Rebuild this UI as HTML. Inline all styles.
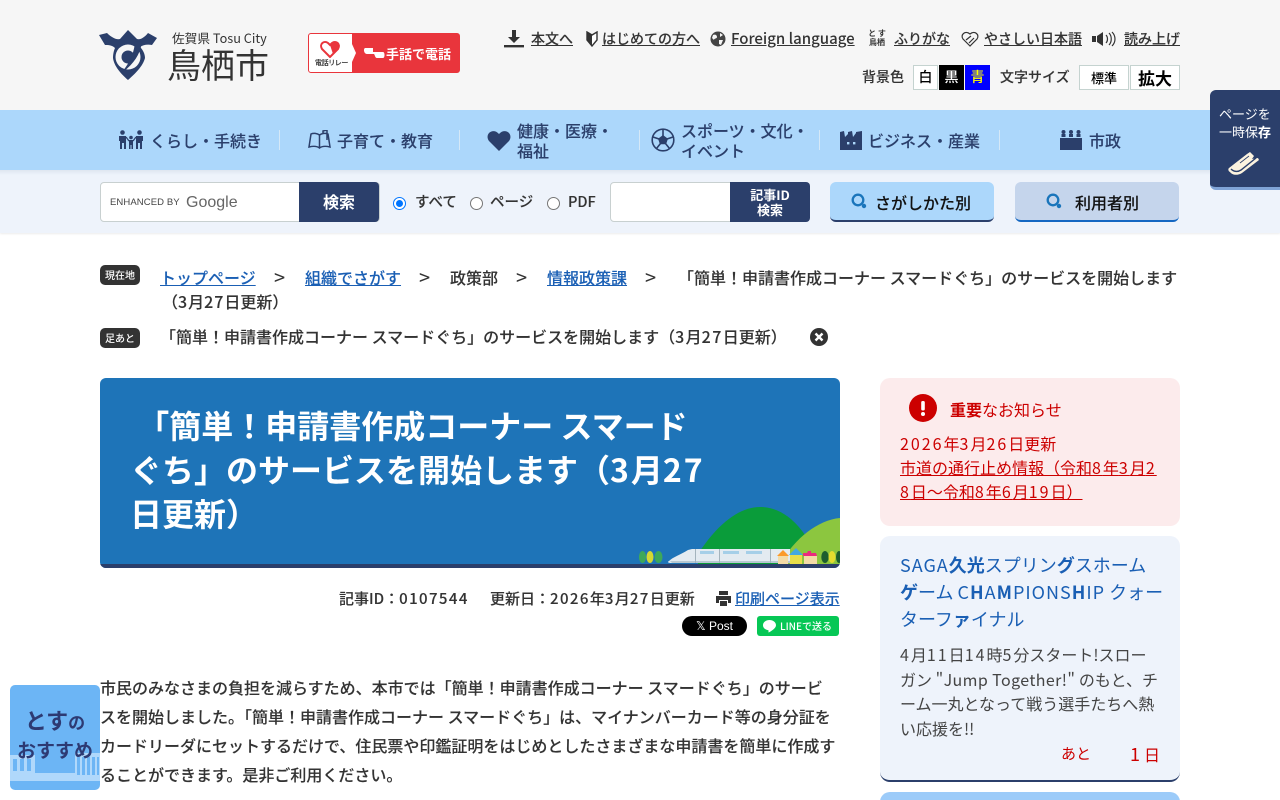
<!DOCTYPE html>
<html lang="ja"><head><meta charset="utf-8"><title>鳥栖市</title>
<style>
*{box-sizing:border-box}
html{margin:0;padding:0;width:1280px;height:800px;overflow:hidden}
body{margin:0;padding:0;width:1280px;height:800px;overflow:hidden;position:relative;background:#fff;font-family:"Liberation Sans","Noto Sans CJK JP",sans-serif;color:#333}
#w{position:absolute;left:0;top:0;width:1280px;height:800px;overflow:hidden}
.a{position:absolute}
.t{position:absolute;white-space:nowrap;font-family:"Noto Sans CJK JP","Liberation Sans",sans-serif}
.b{font-weight:500;-webkit-text-stroke:.1px currentColor}
a{color:inherit;text-decoration:underline}
.d{letter-spacing:1.400px}
.e{letter-spacing:2px}
.c{letter-spacing:1px}
</style></head><body><div id="w">
<div class="a" style="left:0;top:0;width:1280px;height:110px;background:#f6f6f6"></div>
<!-- logo -->
<svg class="a" style="left:99px;top:30px" width="58" height="50" viewBox="0 0 58 50"><path d="M0 5 L8 3 C13 8 18 10 21 9 L29 0 L38 9 C41 10 45 8 49 3 L58 8 L53 15 C48 14 44 15 41 17 C44 20 46 24 46 28 C44 36 36 44 29 50 C22 44 15 36 14 28 C14 24 15 20 16 18 C13 15 9 15 6 15 Z" fill="#2b3f6b"/><circle cx="29" cy="27" r="12.500" fill="#f6f6f6"/><circle cx="29" cy="27" r="6.500" fill="#2b3f6b"/><path d="M43 11 C42 22 36 34 22 43 C30 34 35 24 36 12 Z" fill="#2b3f6b"/></svg>
<div class="t" style="left:172px;top:29px;font-size:12.700px;line-height:18px;color:#333">佐賀県 Tosu City</div>
<div class="t" style="left:167px;top:41px;font-size:34px;line-height:45px;color:#333">鳥栖市</div>
<!-- sign -->
<div class="a" style="left:308px;top:33px;width:152px;height:40px;border:1px solid #e9353c;border-radius:3px;background:#e9353c;overflow:hidden"><div class="a" style="left:0;top:0;width:43px;height:38px;background:#fff"></div>
<div class="a" style="left:43px;top:10px;border-left:4px solid #fff;border-top:9px solid transparent;border-bottom:9px solid transparent"></div>
<svg class="a" style="left:11px;top:6px" width="20" height="18" viewBox="0 0 20 18"><path d="M10 17 L2 9 C-1 4 4 0 8 3 L10 5 L12 3 C16 0 21 4 18 9 Z" fill="none" stroke="#e9353c" stroke-width="2"/><path d="M10 5 L12 3 C16 0 21 4 18 9 L13 14 Z" fill="#e9353c"/></svg>
<div class="t b" style="left:6px;top:24px;font-size:7px;line-height:10px;color:#333;letter-spacing:-.4px">電話リレー</div>
<svg class="a" style="left:54px;top:12px" width="24" height="14" viewBox="0 0 24 14"><path d="M2 2 H10 V6 H20 C22 6 22 12 20 12 H14 C12 12 12 9 11 8 H4 C1 8 0 3 2 2Z" fill="#fff"/></svg>
<div class="t" style="left:77px;top:10px;font-size:13px;font-weight:700;line-height:19px;color:#fff">手話で電話</div></div>
<!-- top links -->
<svg class="a" style="left:504px;top:30px" width="20" height="18" viewBox="0 0 20 18" fill="#333"><path d="M8 0h4v7h4l-6 6-6-6h4z"/><rect x="0" y="15" width="20" height="2.400"/></svg>
<div class="t b" style="left:531px;top:29px;font-size:14px;line-height:20px"><a>本文へ</a></div>
<svg class="a" style="left:586px;top:31px" width="12" height="16" viewBox="0 0 12 16"><path d="M1 1 L6 4 L11 1 V9 L6 15 L1 9Z" fill="#fff" stroke="#333" stroke-width="1.400"/><path d="M1 1 L6 4 V15 L1 9Z" fill="#333"/></svg>
<div class="t b" style="left:602px;top:29px;font-size:14px;line-height:20px"><a>はじめての方へ</a></div>
<svg class="a" style="left:710px;top:31px" width="16" height="16" viewBox="0 0 16 16"><circle cx="8" cy="8" r="7.500" fill="#444"/><path d="M3 4 C5 3 7 4 7 6 C7 8 4 7 4 9 L2 7Z M10 2 L13 4 L10 6Z M9 9 L13 9 L11 14 L9 13Z" fill="#f6f6f6"/></svg>
<div class="t" style="left:731px;top:28px;font-size:15px;line-height:21px;font-weight:500"><a>Foreign language</a></div>
<div class="t" style="left:866px;top:29px;font-size:8px;line-height:9px;color:#333;width:22px;text-align:center;white-space:normal;font-weight:700">と す<br>鳥栖</div>
<div class="t b" style="left:894px;top:29px;font-size:14px;line-height:20px"><a>ふりがな</a></div>
<svg class="a" style="left:961px;top:31px" width="18" height="16" viewBox="0 0 18 16"><path d="M9 15 L2 8 C-1 4 4 -1 9 3 C14 -1 19 4 16 8 Z M5 9 L10 5 M8 12 L13 7" fill="none" stroke="#333" stroke-width="1.200"/></svg>
<div class="t b" style="left:984px;top:29px;font-size:14px;line-height:20px"><a>やさしい日本語</a></div>
<svg class="a" style="left:1092px;top:31px" width="27" height="16" viewBox="0 0 27 16" fill="#333"><rect x="0" y="5" width="4" height="6"/><path d="M5 5 L11 1 V15 L5 11Z"/><path d="M14 4 C16 6 16 10 14 12 M17 2 C20 5 20 11 17 14 M20 1 C24 5 24 11 20 15" stroke="#333" fill="none" stroke-width="1.200"/></svg>
<div class="t b" style="left:1124px;top:29px;font-size:14px;line-height:20px"><a>読み上げ</a></div>
<div class="t b" style="left:862px;top:67px;font-size:14px;line-height:20px">背景色</div>
<div class="t" style="left:913px;top:65px;width:25px;height:25px;background:#fff;border:1px solid #c5d3d0;font-size:14px;line-height:23px;text-align:center;color:#000;font-weight:500">白</div>
<div class="t" style="left:939px;top:65px;width:25px;height:25px;background:#000;font-size:14px;line-height:25px;text-align:center;color:#fff;font-weight:500">黒</div>
<div class="t" style="left:965px;top:65px;width:25px;height:25px;background:#00f;font-size:14px;line-height:25px;text-align:center;color:#ff0;font-weight:500">青</div>
<div class="t b" style="left:1000px;top:67px;font-size:14px;line-height:20px">文字サイズ</div>
<div class="t" style="left:1079px;top:65px;width:50px;height:25px;background:#fff;border:1px solid #c5d3d0;font-size:13px;line-height:23px;text-align:center;color:#000;font-weight:500">標準</div>
<div class="t" style="left:1130px;top:65px;width:50px;height:25px;background:#fff;border:1px solid #c5d3d0;font-size:17px;line-height:23px;text-align:center;color:#000;font-weight:700">拡大</div>
<!-- search bar background -->
<div class="a" style="left:0;top:170px;width:1280px;height:63px;background:linear-gradient(#dfe6f0 0,#eef3fb 5px);box-shadow:0 1px 2px rgba(0,0,0,.08)"></div>
<!-- nav -->
<div class="a" style="left:0;top:110px;width:1280px;height:60px;background:#acd7fb"></div>
<div class="a" style="left:279px;top:130px;width:1px;height:20px;background:#d5e8f7"></div>
<div class="a" style="left:459px;top:130px;width:1px;height:20px;background:#d5e8f7"></div>
<div class="a" style="left:639px;top:130px;width:1px;height:20px;background:#d5e8f7"></div>
<div class="a" style="left:819px;top:130px;width:1px;height:20px;background:#d5e8f7"></div>
<div class="a" style="left:999px;top:130px;width:1px;height:20px;background:#d5e8f7"></div>
<svg class="a" style="left:119px;top:130px" width="24" height="20" viewBox="0 0 24 20" fill="#2b3f6b"><circle cx="3.500" cy="2.500" r="2.300"/><circle cx="20.500" cy="2.500" r="2.300"/><circle cx="12" cy="7.500" r="1.800"/><path d="M0 6h7v13H5v-6H3v6H1V11H0zM17 6h7v5h-1v8h-2v-6h-2v6h-2z"/><path d="M10 10h4v9h-1.500v-4h-1v4H10z"/><path d="M7 7l3 4M17 7l-3 4" stroke="#2b3f6b" stroke-width="1.200"/></svg>
<div class="t b" style="left:150px;top:129px;font-size:16px;line-height:22px;color:#2b3f6b">くらし・手続き</div>
<svg class="a" style="left:308px;top:130px" width="23" height="20" viewBox="0 0 23 20" fill="none" stroke="#2b3f6b" stroke-width="1.500"><path d="M11.500 5 C9 3 5 3 3 4 L1 17 C5 16 9 16 11.500 18 C14 16 18 16 22 17 L20 4 C18 3 14 3 11.500 5Z M11.500 5V18 M15 4V1L19 0V10"/></svg>
<div class="t b" style="left:337px;top:129px;font-size:16px;line-height:22px;color:#2b3f6b">子育て・教育</div>
<svg class="a" style="left:487px;top:130px" width="24" height="21" viewBox="0 0 24 21"><path d="M12 21 L2 11 C-3 4 6 -3 12 4 C18 -3 27 4 22 11Z" fill="#2b3f6b"/></svg>
<div class="t b" style="left:517px;top:120px;font-size:16px;line-height:20px;color:#2b3f6b">健康・医療・<br>福祉</div>
<svg class="a" style="left:651px;top:128px" width="24" height="24" viewBox="0 0 24 24" fill="none" stroke="#2b3f6b" stroke-width="1.600"><circle cx="12" cy="12" r="10.800"/><path d="M12 8l4 3-1.500 4.500h-5L8 11Z" fill="#2b3f6b"/><path d="M12 8V2M16 11l6-2M14.500 15.500l4 5M9.500 15.500l-4 5M8 11L2 9"/></svg>
<div class="t b" style="left:681px;top:120px;font-size:16px;line-height:20px;color:#2b3f6b">スポーツ・文化・<br>イベント</div>
<svg class="a" style="left:840px;top:131px" width="22" height="19" viewBox="0 0 22 19"><path d="M0 19V1L4 0 5 6 8 3V1L12 0 13 6 16 2V1L22 0V19Z" fill="#2b3f6b"/><rect x="7" y="11" width="2.400" height="2.400" fill="#acd7fb"/><rect x="13" y="11" width="2.400" height="2.400" fill="#acd7fb"/></svg>
<div class="t b" style="left:868px;top:129px;font-size:16px;line-height:22px;color:#2b3f6b">ビジネス・産業</div>
<svg class="a" style="left:1060px;top:130px" width="22" height="20" viewBox="0 0 22 20" fill="#2b3f6b"><rect x="0" y="8" width="22" height="12"/><circle cx="3.500" cy="2" r="2"/><circle cx="11" cy="2" r="2"/><circle cx="18.500" cy="2" r="2"/><rect x="1.500" y="4" width="4" height="3"/><rect x="9" y="4" width="4" height="3"/><rect x="16.500" y="4" width="4" height="3"/></svg>
<div class="t b" style="left:1089px;top:129px;font-size:16px;line-height:22px;color:#2b3f6b">市政</div>
<!-- search -->
<div class="a" style="left:100px;top:182px;width:280px;height:40px;background:#fff;border:1px solid #c8d0d0;border-radius:4px"></div>
<div class="a" style="left:299px;top:182px;width:80px;height:40px;background:#2b3f6b;border-radius:0 4px 4px 0"></div>
<div class="t" style="left:110px;top:196px;font-size:9.500px;line-height:14px;color:#444;letter-spacing:.1px;font-family:'Liberation Sans',sans-serif">ENHANCED BY</div>
<div class="t" style="left:186px;top:192px;font-size:16px;line-height:21px;color:#666;font-family:'Liberation Sans',sans-serif">Google</div>
<div class="t" style="left:323px;top:190px;font-size:16px;line-height:23px;color:#fff;font-weight:700">検索</div>
<div class="a" style="left:393px;top:197px;width:13px;height:13px;border-radius:50%;border:1px solid #0075ff;background:#fff"><div class="a" style="left:2px;top:2px;width:7px;height:7px;border-radius:50%;background:#0075ff"></div></div>
<div class="t b" style="left:415px;top:192px;font-size:14.500px;line-height:20px">すべて</div>
<div class="a" style="left:470px;top:197px;width:13px;height:13px;border-radius:50%;border:1px solid #767676;background:#fff"></div>
<div class="t b" style="left:490px;top:192px;font-size:14.500px;line-height:20px">ページ</div>
<div class="a" style="left:547px;top:197px;width:13px;height:13px;border-radius:50%;border:1px solid #767676;background:#fff"></div>
<div class="t b" style="left:568px;top:192px;font-size:14.500px;line-height:20px">PDF</div>
<div class="a" style="left:610px;top:182px;width:125px;height:40px;background:#fff;border:1px solid #c8d0d0;border-radius:4px"></div>
<div class="t" style="left:730px;top:182px;width:80px;height:40px;background:#2b3f6b;border-radius:0 4px 4px 0;color:#fff;font-size:13px;line-height:15px;text-align:center;padding-top:5px;font-weight:700">記事ID<br>検索</div>
<div class="a" style="left:830px;top:182px;width:164px;height:40px;background:#acd7fb;border-radius:6px;border-bottom:2px solid #2b3f6b"></div>
<svg class="a" style="left:851px;top:193px" width="17" height="17" viewBox="0 0 17 17" fill="none"><circle cx="7" cy="7" r="5.300" stroke="#1a75bb" stroke-width="2.300"/><circle cx="13" cy="13" r="2.200" fill="#1a75bb"/></svg>
<div class="t b" style="left:875px;top:191px;font-size:16px;line-height:22px;color:#111">さがしかた別</div>
<div class="a" style="left:1015px;top:182px;width:164px;height:40px;background:#c5d5ec;border-radius:6px;border-bottom:2px solid #1467c2"></div>
<svg class="a" style="left:1046px;top:193px" width="17" height="17" viewBox="0 0 17 17" fill="none"><circle cx="7" cy="7" r="5.300" stroke="#1a75bb" stroke-width="2.300"/><circle cx="13" cy="13" r="2.200" fill="#1a75bb"/></svg>
<div class="t b" style="left:1075px;top:191px;font-size:16px;line-height:22px;color:#111">利用者別</div>
<!-- save -->
<div class="a" style="left:1210px;top:90px;width:70px;height:100px;background:#2b3f6b;border-radius:6px 0 0 6px;border-bottom:3px solid #7fa3d6"></div>
<div class="t" style="left:1219px;top:105px;font-size:13px;line-height:18px;color:#fff">ページを<br>一時保<b>存</b></div>
<svg class="a" style="left:1228px;top:151px" width="33" height="26" viewBox="0 0 33 26"><path d="M1 17 L19 3 L22 1 L26 5 L24 8 L30 7 L31 9 L14 22 C9 25 4 24 2 21 C0 20 0 18 1 17Z" fill="#fcf3df"/><path d="M3 18 C6 21 10 21 13 19 L28 7" stroke="#2b3f6b" stroke-width="1.400" fill="none"/><path d="M12 12 L21 5" stroke="#2b3f6b" stroke-width=".8"/></svg>
<!-- breadcrumb -->
<div class="t" style="left:100px;top:265px;width:40px;height:20px;background:#333;border-radius:5px;color:#fff;font-size:10px;line-height:20px;text-align:center;font-weight:500">現在地</div>
<div class="t b" style="left:160px;top:266px;font-size:16px;line-height:22px;color:#1a5fb4"><a>トップページ</a></div>
<div class="t" style="left:274px;top:266px;font-size:20px;line-height:22px">&gt;</div>
<div class="t b" style="left:305px;top:266px;font-size:16px;line-height:22px;color:#1a5fb4"><a>組織でさがす</a></div>
<div class="t" style="left:419px;top:266px;font-size:20px;line-height:22px">&gt;</div>
<div class="t b" style="left:450px;top:266px;font-size:16px;line-height:22px">政策部</div>
<div class="t" style="left:516px;top:266px;font-size:20px;line-height:22px">&gt;</div>
<div class="t b" style="left:547px;top:266px;font-size:16px;line-height:22px;color:#1a5fb4"><a>情報政策課</a></div>
<div class="t" style="left:645px;top:266px;font-size:20px;line-height:22px">&gt;</div>
<div class="t b" style="left:678px;top:266px;font-size:16px;line-height:22px">「簡単！申請書作成コーナー スマードぐち」のサービスを開始します</div>
<div class="t b" style="left:162px;top:290px;font-size:16px;line-height:22px">（<span class="c">3</span>月<span class="c">27</span>日更新）</div>
<div class="t" style="left:100px;top:328px;width:40px;height:20px;background:#333;border-radius:5px;color:#fff;font-size:10px;line-height:20px;text-align:center;font-weight:500">足あと</div>
<div class="t b" style="left:160px;top:325px;font-size:16px;line-height:22px">「簡単！申請書作成コーナー スマードぐち」のサービスを開始します（<span class="d">3</span>月<span class="d">27</span>日更新）</div>
<svg class="a" style="left:810px;top:328px" width="18" height="18" viewBox="0 0 18 18"><circle cx="9" cy="9" r="9" fill="#333"/><path d="M5.500 5.500l7 7M12.500 5.500l-7 7" stroke="#fff" stroke-width="2.400"/></svg>
<!-- title -->
<div class="a" style="left:100px;top:378px;width:740px;height:190px;background:#1e74b8;border-radius:6px;overflow:hidden">
<svg class="a" style="left:520px;top:110px" width="220" height="80" viewBox="0 0 220 80">
<path d="M78 66 C100 32 122 19 140 19 C165 19 186 40 200 76 H78Z" fill="#0a9c3a"/>
<path d="M160 76 C175 50 198 32 220 30 V76Z" fill="#8cc63f"/>
<ellipse cx="22.500" cy="69" rx="3.600" ry="6" fill="#3da85a"/><ellipse cx="30" cy="69" rx="3.500" ry="6" fill="#d5d832"/><ellipse cx="38.500" cy="69" rx="4" ry="6" fill="#3da85a"/>
<path d="M49 73 C53 69 60 67 68 62 L72 61 H170 V75 H52 C48 75 47 74 49 73Z" fill="#e3ebf1"/><path d="M50 73 H170 V75 H52Z" fill="#b8c8d2"/>
<rect x="80" y="63" width="14" height="3" fill="#a5cfe8"/><rect x="103" y="63" width="16" height="3" fill="#a5cfe8"/><rect x="126" y="63" width="16" height="3" fill="#a5cfe8"/>
<rect x="75" y="61" width="1" height="14" fill="#a4b4bd"/><rect x="99" y="61" width="1" height="14" fill="#a4b4bd"/><rect x="150" y="61" width="1" height="14" fill="#a4b4bd"/>
<path d="M157 68l6-6 6 6z" fill="#fb9a2b"/><rect x="158" y="68" width="10" height="8" fill="#f3dba7"/>
<path d="M169 67l7-7 7 7z" fill="#44a8e0"/><rect x="170" y="67" width="12" height="9" fill="#e8de4a"/>
<path d="M183 65h4l1-2h3v2h5l1 3h-14z" fill="#ea2b7e"/><rect x="184" y="68" width="13" height="8" fill="#f3dba7"/>
<ellipse cx="205" cy="69" rx="3.700" ry="6" fill="#1d5e2e"/><ellipse cx="212" cy="69" rx="3.500" ry="6" fill="#e4dd2f"/><ellipse cx="219" cy="69" rx="3" ry="6" fill="#1d5e2e"/></svg>
<div class="a" style="left:0;top:186px;width:740px;height:4px;background:#2b3f6b"></div>
<div class="t" style="left:30px;top:25px;font-size:32px;line-height:44px;color:#fff;font-weight:700;width:620px;white-space:normal">&nbsp;「簡単！申請書作成コーナー スマード<br>ぐち」のサービスを開始します（<span class="e">3</span>月<span class="e">27</span><br>日更新）</div>
</div>
<div class="t b" style="left:339px;top:588px;font-size:15px;line-height:22px">記事ID：<span class="d">0107544</span></div>
<div class="t b" style="left:490px;top:588px;font-size:15px;line-height:22px">更新日：<span class="d">2026</span>年<span class="d">3</span>月<span class="d">27</span>日更新</div>
<svg class="a" style="left:716px;top:591px" width="15" height="15" viewBox="0 0 15 15" fill="#333"><path d="M3 0h9v4H3z"/><path d="M0 5h15v7h-3V9H3v3H0z"/><path d="M4 10h7v5H4z"/></svg>
<div class="t b" style="left:735px;top:588px;font-size:15px;line-height:22px;color:#1a5fb4"><a>印刷ページ表示</a></div>
<div class="t" style="left:682px;top:616px;width:65px;height:20px;background:#000;border-radius:10px;color:#fff;font-size:12px;line-height:20px;text-align:center;font-family:'Liberation Sans',sans-serif">𝕏 Post</div>
<div class="t" style="left:757px;top:616px;width:82px;height:20px;background:#06c755;border-radius:3px;color:#fff;font-size:10px;line-height:20px;padding-left:23px;font-weight:500">LINEで送る</div>
<svg class="a" style="left:763px;top:620px" width="13" height="13" viewBox="0 0 13 13"><path d="M6.500 0C2.900 0 0 2.300 0 5.200C0 8 2.300 9.700 5.500 10.200L5.500 12.500C7.500 11.500 13 8.500 13 5.200C13 2.300 10 0 6.500 0Z" fill="#fff"/></svg>
<!-- body -->
<div class="t b" style="left:100px;top:673px;font-size:16px;line-height:29px">市民のみなさまの負担を減らすため、本市では「簡単！申請書作成コーナー スマードぐち」のサービ<br>スを開始しました。「簡単！申請書作成コーナー スマードぐち」は、マイナンバーカード等の身分証を<br>カードリーダにセットするだけで、住民票や印鑑証明をはじめとしたさまざまな申請書を簡単に作成す<br>ることができます。是非ご利用ください。</div>
<!-- tosu recommends -->
<div class="a" style="left:10px;top:685px;width:90px;height:105px;background:#6cb5f5;border-radius:5px;overflow:hidden">
<div class="a" style="left:0;top:70px;width:25px;height:26px;background:#b0d8fb"></div><div class="a" style="left:25px;top:88px;width:40px;height:8px;background:#b0d8fb"></div><div class="a" style="left:65px;top:68px;width:25px;height:28px;background:#b0d8fb"></div>
<div class="a" style="left:3px;top:74px;width:20px;height:12px;background:repeating-linear-gradient(90deg,#6cb5f5 0 4px,#b0d8fb 4px 7px)"></div>
<div class="a" style="left:67px;top:72px;width:22px;height:18px;background:repeating-linear-gradient(90deg,#6cb5f5 0 3px,#b0d8fb 3px 5px)"></div></div>
<div class="t" style="left:10px;top:707px;width:90px;text-align:center;color:#2d3a73;font-weight:700;font-size:22px;line-height:26px;white-space:normal">とす<span style="font-size:17px">の</span><br><span style="font-size:19px">おすすめ</span></div>
<!-- sidebar -->
<div class="a" style="left:880px;top:378px;width:300px;height:148px;background:#fcebec;border-radius:10px"></div>
<svg class="a" style="left:909px;top:394px" width="28" height="28" viewBox="0 0 28 28"><circle cx="14" cy="14" r="14" fill="#cc0000"/><rect x="12.200" y="7" width="3.600" height="9.500" rx="1.500" fill="#fff"/><circle cx="14" cy="20" r="2" fill="#fff"/></svg>
<div class="t" style="left:950px;top:398px;font-size:16px;line-height:22px;color:#cc0000"><b>重要</b>なお知らせ</div>
<div class="t" style="left:900px;top:431px;font-size:16px;line-height:24px;color:#cc0000"><span class="e">2026</span>年<span class="e">3</span>月<span class="e">26</span>日更新</div>
<div class="t" style="left:900px;top:455px;font-size:16px;line-height:24px;color:#cc0000"><a>市道の通行止め情報（令和<span class="e">8</span>年<span class="e">3</span>月<span class="e">2</span><br><span class="e">8</span>日～令和<span class="e">8</span>年<span class="e">6</span>月<span class="e">19</span>日）</a></div>
<div class="a" style="left:880px;top:536px;width:300px;height:246px;background:#eef3fb;border-radius:10px;border-bottom:2px solid #2b3f6b"></div>
<div class="t" style="left:900px;top:552px;font-size:18px;line-height:27px;color:#1a5fb4"><span class="c">SAGA</span><b>久光</b>スプリン<b>グ</b>スホーム<br><b>ゲ</b>ーム <span class="c">C<b>H</b>A<b>M</b>PIONS<b>H</b>IP</span> クォー<br>ターフ<b>ァ</b>イナル</div>
<div class="t" style="left:900px;top:642px;font-size:16px;line-height:24.500px;color:#444"><span class="e">4</span>月<span class="e">11</span>日<span class="e">14</span>時<span class="e">5</span>分スタート!スロー<br>ガン <span style="letter-spacing:.4px">"Jump Together!"</span> のもと、チ<br>ーム一丸となって戦う選手たちへ熱<br>い応援を!!</div>
<div class="t" style="left:1061px;top:744px;font-size:15px;line-height:20px;color:#cc0000">あと</div>
<div class="t" style="left:1130px;top:742px;font-size:18px;line-height:24px;color:#cc0000">1<span style="font-size:16px;margin-left:4px">日</span></div>
<div class="a" style="left:880px;top:792px;width:300px;height:20px;background:#9ccbf9;border-radius:10px 10px 0 0"></div>
</div></body></html>
